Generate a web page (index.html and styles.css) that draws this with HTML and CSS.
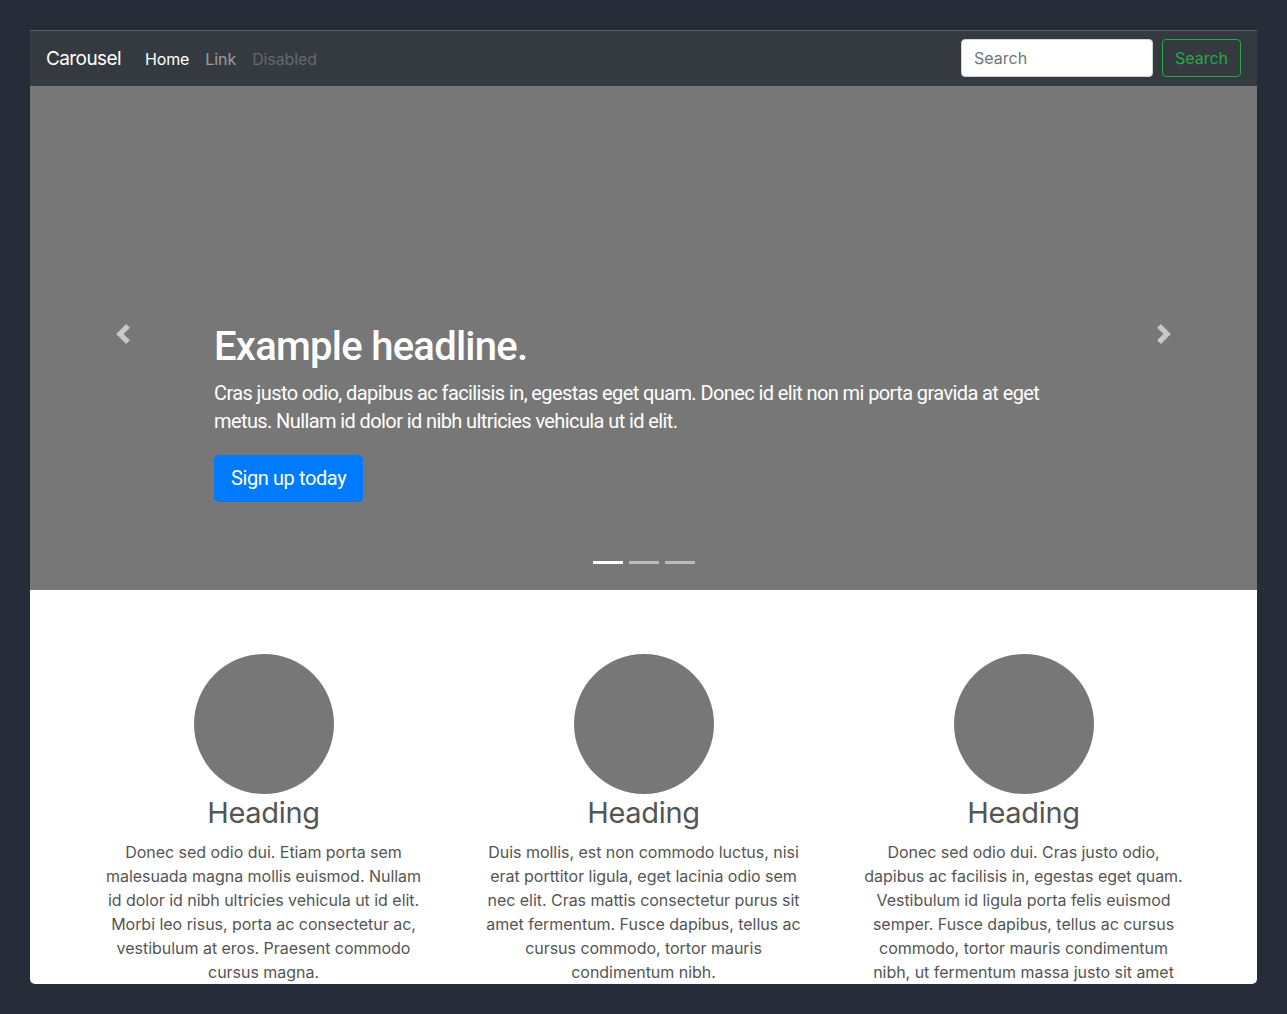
FILE: index.html
```html
<!DOCTYPE html>
<html lang="en">
<head>
<meta charset="utf-8">
<title>Carousel</title>
<link rel="stylesheet" href="styles.css">
</head>
<body>
<div class="window">
  <nav class="navbar">
    <a class="brand" href="#">Carousel</a>
    <ul class="nav">
      <li><a class="nav-link active" href="#">Home</a></li>
      <li><a class="nav-link" href="#">Link</a></li>
      <li><a class="nav-link disabled" href="#">Disabled</a></li>
    </ul>
    <form class="search">
      <input class="search-input" type="text" placeholder="Search">
      <button class="search-btn" type="button">Search</button>
    </form>
  </nav>

  <div class="carousel">
    <a class="control prev" href="#">
      <svg width="20" height="20" viewBox="0 0 8 8"><path fill="#c8c8c8" d="M5.25 0l-4 4 4 4 1.5-1.5-2.5-2.5 2.5-2.5-1.5-1.5z"/></svg>
    </a>
    <a class="control next" href="#">
      <svg width="20" height="20" viewBox="0 0 8 8"><path fill="#c8c8c8" d="M2.75 0l-1.5 1.5 2.5 2.5-2.5 2.5 1.5 1.5 4-4-4-4z"/></svg>
    </a>
    <div class="caption">
      <h1>Example headline.</h1>
      <p>Cras justo odio, dapibus ac facilisis in, egestas eget quam. Donec id elit non mi porta gravida at eget metus. Nullam id dolor id nibh ultricies vehicula ut id elit.</p>
      <p class="cta"><a class="btn-primary" href="#">Sign up today</a></p>
    </div>
    <ol class="indicators">
      <li class="active"></li>
      <li></li>
      <li></li>
    </ol>
  </div>

  <div class="marketing">
    <div class="col">
      <div class="circle"></div>
      <h2>Heading</h2>
      <p>Donec sed odio dui. Etiam porta sem malesuada magna mollis euismod. Nullam id dolor id nibh ultricies vehicula ut id elit. Morbi leo risus, porta ac consectetur ac, vestibulum at eros. Praesent commodo cursus magna.</p>
    </div>
    <div class="col">
      <div class="circle"></div>
      <h2>Heading</h2>
      <p>Duis mollis, est non commodo luctus, nisi erat porttitor ligula, eget lacinia odio sem nec elit. Cras mattis consectetur purus sit amet fermentum. Fusce dapibus, tellus ac cursus commodo, tortor mauris condimentum nibh.</p>
    </div>
    <div class="col">
      <div class="circle"></div>
      <h2>Heading</h2>
      <p>Donec sed odio dui. Cras justo odio, dapibus ac facilisis in, egestas eget quam. Vestibulum id ligula porta felis euismod semper. Fusce dapibus, tellus ac cursus commodo, tortor mauris condimentum nibh, ut fermentum massa justo sit amet risus.</p>
    </div>
  </div>
</div>
</body>
</html>
```

FILE: styles.css
```css
* { box-sizing: border-box; }
html, body { margin: 0; padding: 0; }
body {
  background: #262c38;
  padding: 30px;
  font-family: Inter, "Liberation Sans", Arial, sans-serif;
}
.window {
  width: 1227px;
  height: 954px;
  background: #fff;
  border-top: 1px solid #5d6168;
  border-radius: 0 0 5px 5px;
  overflow: hidden;
  display: flex;
  flex-direction: column;
}
.navbar {
  height: 55px;
  flex: none;
  background: #343a40;
  display: flex;
  align-items: center;
  padding: 0 16px;
}
.brand {
  font-size: 19px;
  letter-spacing: -0.6px;
  color: #fff;
  text-decoration: none;
  margin-right: 16px;
}
.nav {
  list-style: none;
  margin: 0;
  padding: 0;
  display: flex;
}
.nav-link {
  display: block;
  padding: 8px;
  font-size: 16px;
  letter-spacing: -0.1px;
  color: rgba(255,255,255,.5);
  text-decoration: none;
}
.nav-link.active { color: #fff; }
.nav-link.disabled { color: rgba(255,255,255,.25); }
.search {
  margin-left: auto;
  display: flex;
  gap: 9px;
  margin-bottom: 1px;
}
.search-input {
  width: 192px;
  height: 38px;
  border: 1px solid #ced4da;
  border-radius: 4px;
  padding: 6px 12px;
  font-family: Inter, "Liberation Sans", sans-serif;
  font-size: 16px;
  color: #495057;
  background: #fff;
}
.search-input::placeholder { color: #6c757d; }
.search-btn {
  height: 38px;
  width: 79px;
  border: 1px solid #28a745;
  border-radius: 4px;
  background: transparent;
  color: #28a745;
  font-family: Inter, "Liberation Sans", sans-serif;
  font-size: 16px;
  padding: 0;
}
.carousel {
  position: relative;
  height: 504px;
  flex: none;
  background: #777;
  display: flex;
  align-items: flex-end;
  padding: 0 184px 48px 184px;
}
.caption {
  width: 100%;
  color: #fff;
  padding: 20px 0;
  font-family: Roboto, Inter, sans-serif;
}
.caption h1 {
  margin: 0 0 8px;
  font-size: 40px;
  line-height: 48px;
  font-weight: 500;
  letter-spacing: -0.75px;
}
.caption p {
  margin: 0 0 20px;
  font-size: 20px;
  line-height: 28px;
  letter-spacing: -0.6px;
}
.caption p.cta { margin: 0 0 20px; }
.btn-primary {
  display: inline-block;
  background: #007bff;
  color: #fff;
  text-decoration: none;
  font-size: 20px;
  line-height: 30px;
  padding: 8px 17px 9px 17px;
  border-radius: 4.8px;
  letter-spacing: -0.4px;
}
.control {
  position: absolute;
  top: 50%;
  margin-top: -14px;
  width: 20px;
  height: 20px;
  display: flex;
}
.control.prev { left: 83px; }
.control.next { right: 83px; }
.indicators {
  position: absolute;
  left: 0;
  right: 0;
  bottom: 26px;
  margin: 0;
  padding: 0;
  list-style: none;
  display: flex;
  justify-content: center;
  gap: 6px;
}
.indicators li {
  width: 30px;
  height: 3px;
  background: rgba(255,255,255,.5);
}
.indicators li.active { background: #fff; }
.marketing {
  width: 1140px;
  margin: 64px auto 0;
  display: flex;
}
.col {
  width: 380px;
  padding: 0 15px;
  text-align: center;
  color: #555;
}
.circle {
  width: 140px;
  height: 140px;
  border-radius: 50%;
  background: #777;
  margin: 0 auto;
}
.col h2 {
  margin: 0 0 8px;
  font-weight: 400;
  font-size: 29px;
  line-height: 38px;
  letter-spacing: -0.3px;
  color: #555;
}
.col p {
  margin: 0 12px;
  font-size: 16px;
  line-height: 24px;
  letter-spacing: -0.03px;
}
```
